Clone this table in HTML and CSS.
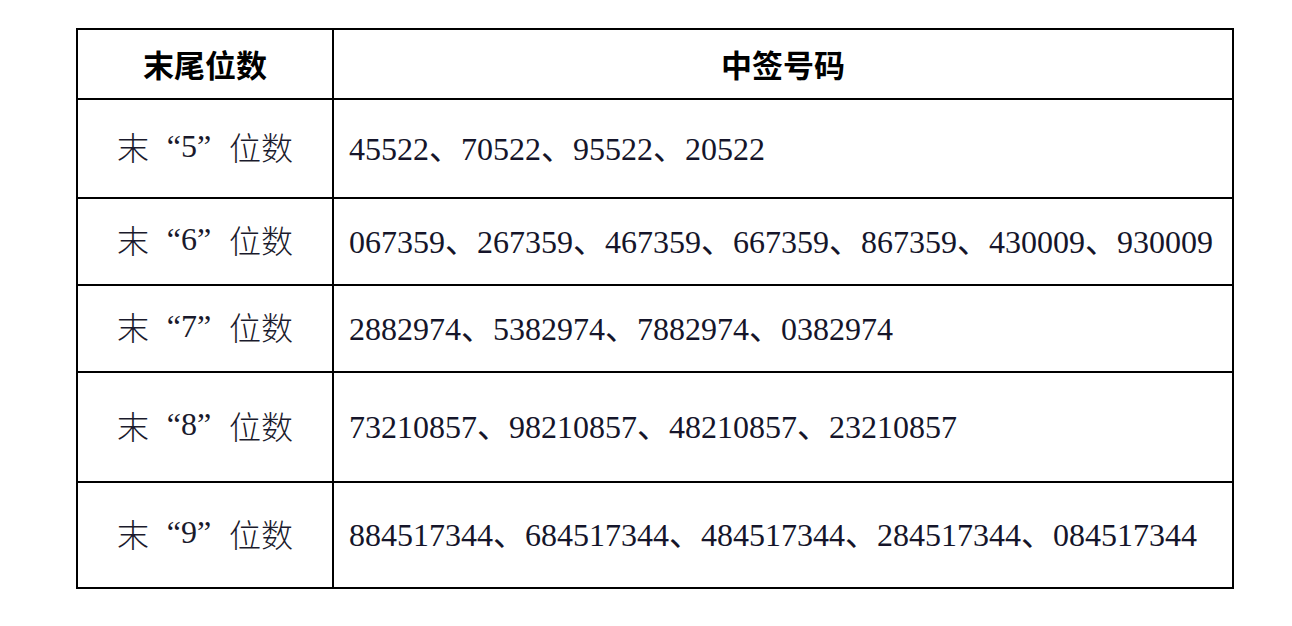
FILE: index.html
```html
<!DOCTYPE html>
<html lang="zh-CN">
<head>
<meta charset="utf-8">
<title>中签号码</title>
<link rel="stylesheet" href="styles.css">
</head>
<body>
<div class="table">
  <div class="cell head">末尾位数</div>
  <div class="cell head">中签号码</div>

  <div class="cell label">末<span class="ql">“</span><span class="d">5</span><span class="qr">”</span>位数</div>
  <div class="cell nums">45522、70522、95522、20522</div>

  <div class="cell label">末<span class="ql">“</span><span class="d">6</span><span class="qr">”</span>位数</div>
  <div class="cell nums">067359、267359、467359、667359、867359、430009、930009</div>

  <div class="cell label">末<span class="ql">“</span><span class="d">7</span><span class="qr">”</span>位数</div>
  <div class="cell nums">2882974、5382974、7882974、0382974</div>

  <div class="cell label">末<span class="ql">“</span><span class="d">8</span><span class="qr">”</span>位数</div>
  <div class="cell nums">73210857、98210857、48210857、23210857</div>

  <div class="cell label">末<span class="ql">“</span><span class="d">9</span><span class="qr">”</span>位数</div>
  <div class="cell nums">884517344、684517344、484517344、284517344、084517344</div>
</div>
</body>
</html>
```

FILE: styles.css
```css
html, body {
  margin: 0;
  padding: 0;
  background: #ffffff;
}

.table {
  display: grid;
  grid-template-columns: 256px 900px;
  grid-template-rows: 70px 99px 87px 87px 110px 106px;
  margin: 28px 0 0 76px;
  width: 1156px;
  border-left: 2px solid #000;
  border-top: 2px solid #000;
}

.cell {
  display: flex;
  align-items: center;
  border-right: 2px solid #000;
  border-bottom: 2px solid #000;
  box-sizing: border-box;
  white-space: nowrap;
}

.head {
  justify-content: center;
  font-family: "Noto Sans CJK SC", sans-serif;
  font-weight: 700;
  font-size: 31px;
  color: #000;
  padding-bottom: 2px;
}

.label {
  justify-content: center;
  font-family: "Noto Sans CJK SC", sans-serif;
  font-weight: 300;
  font-size: 32px;
  color: #1a1a2c;
  padding-bottom: 5px;
}

.label .d {
  font-family: "Liberation Serif", serif;
  display: inline-block;
  width: 0.5em;
  text-align: center;
}

.label .ql,
.label .qr {
  display: inline-block;
  width: 1em;
  font-family: "Liberation Serif", serif;
}

.label .ql { text-align: right; }
.label .qr { text-align: left; }

.nums {
  padding-left: 15px;
  padding-bottom: 6px;
  font-family: "Liberation Serif", "Noto Sans CJK SC", serif;
  font-size: 32px;
  color: #15152a;
}
```
